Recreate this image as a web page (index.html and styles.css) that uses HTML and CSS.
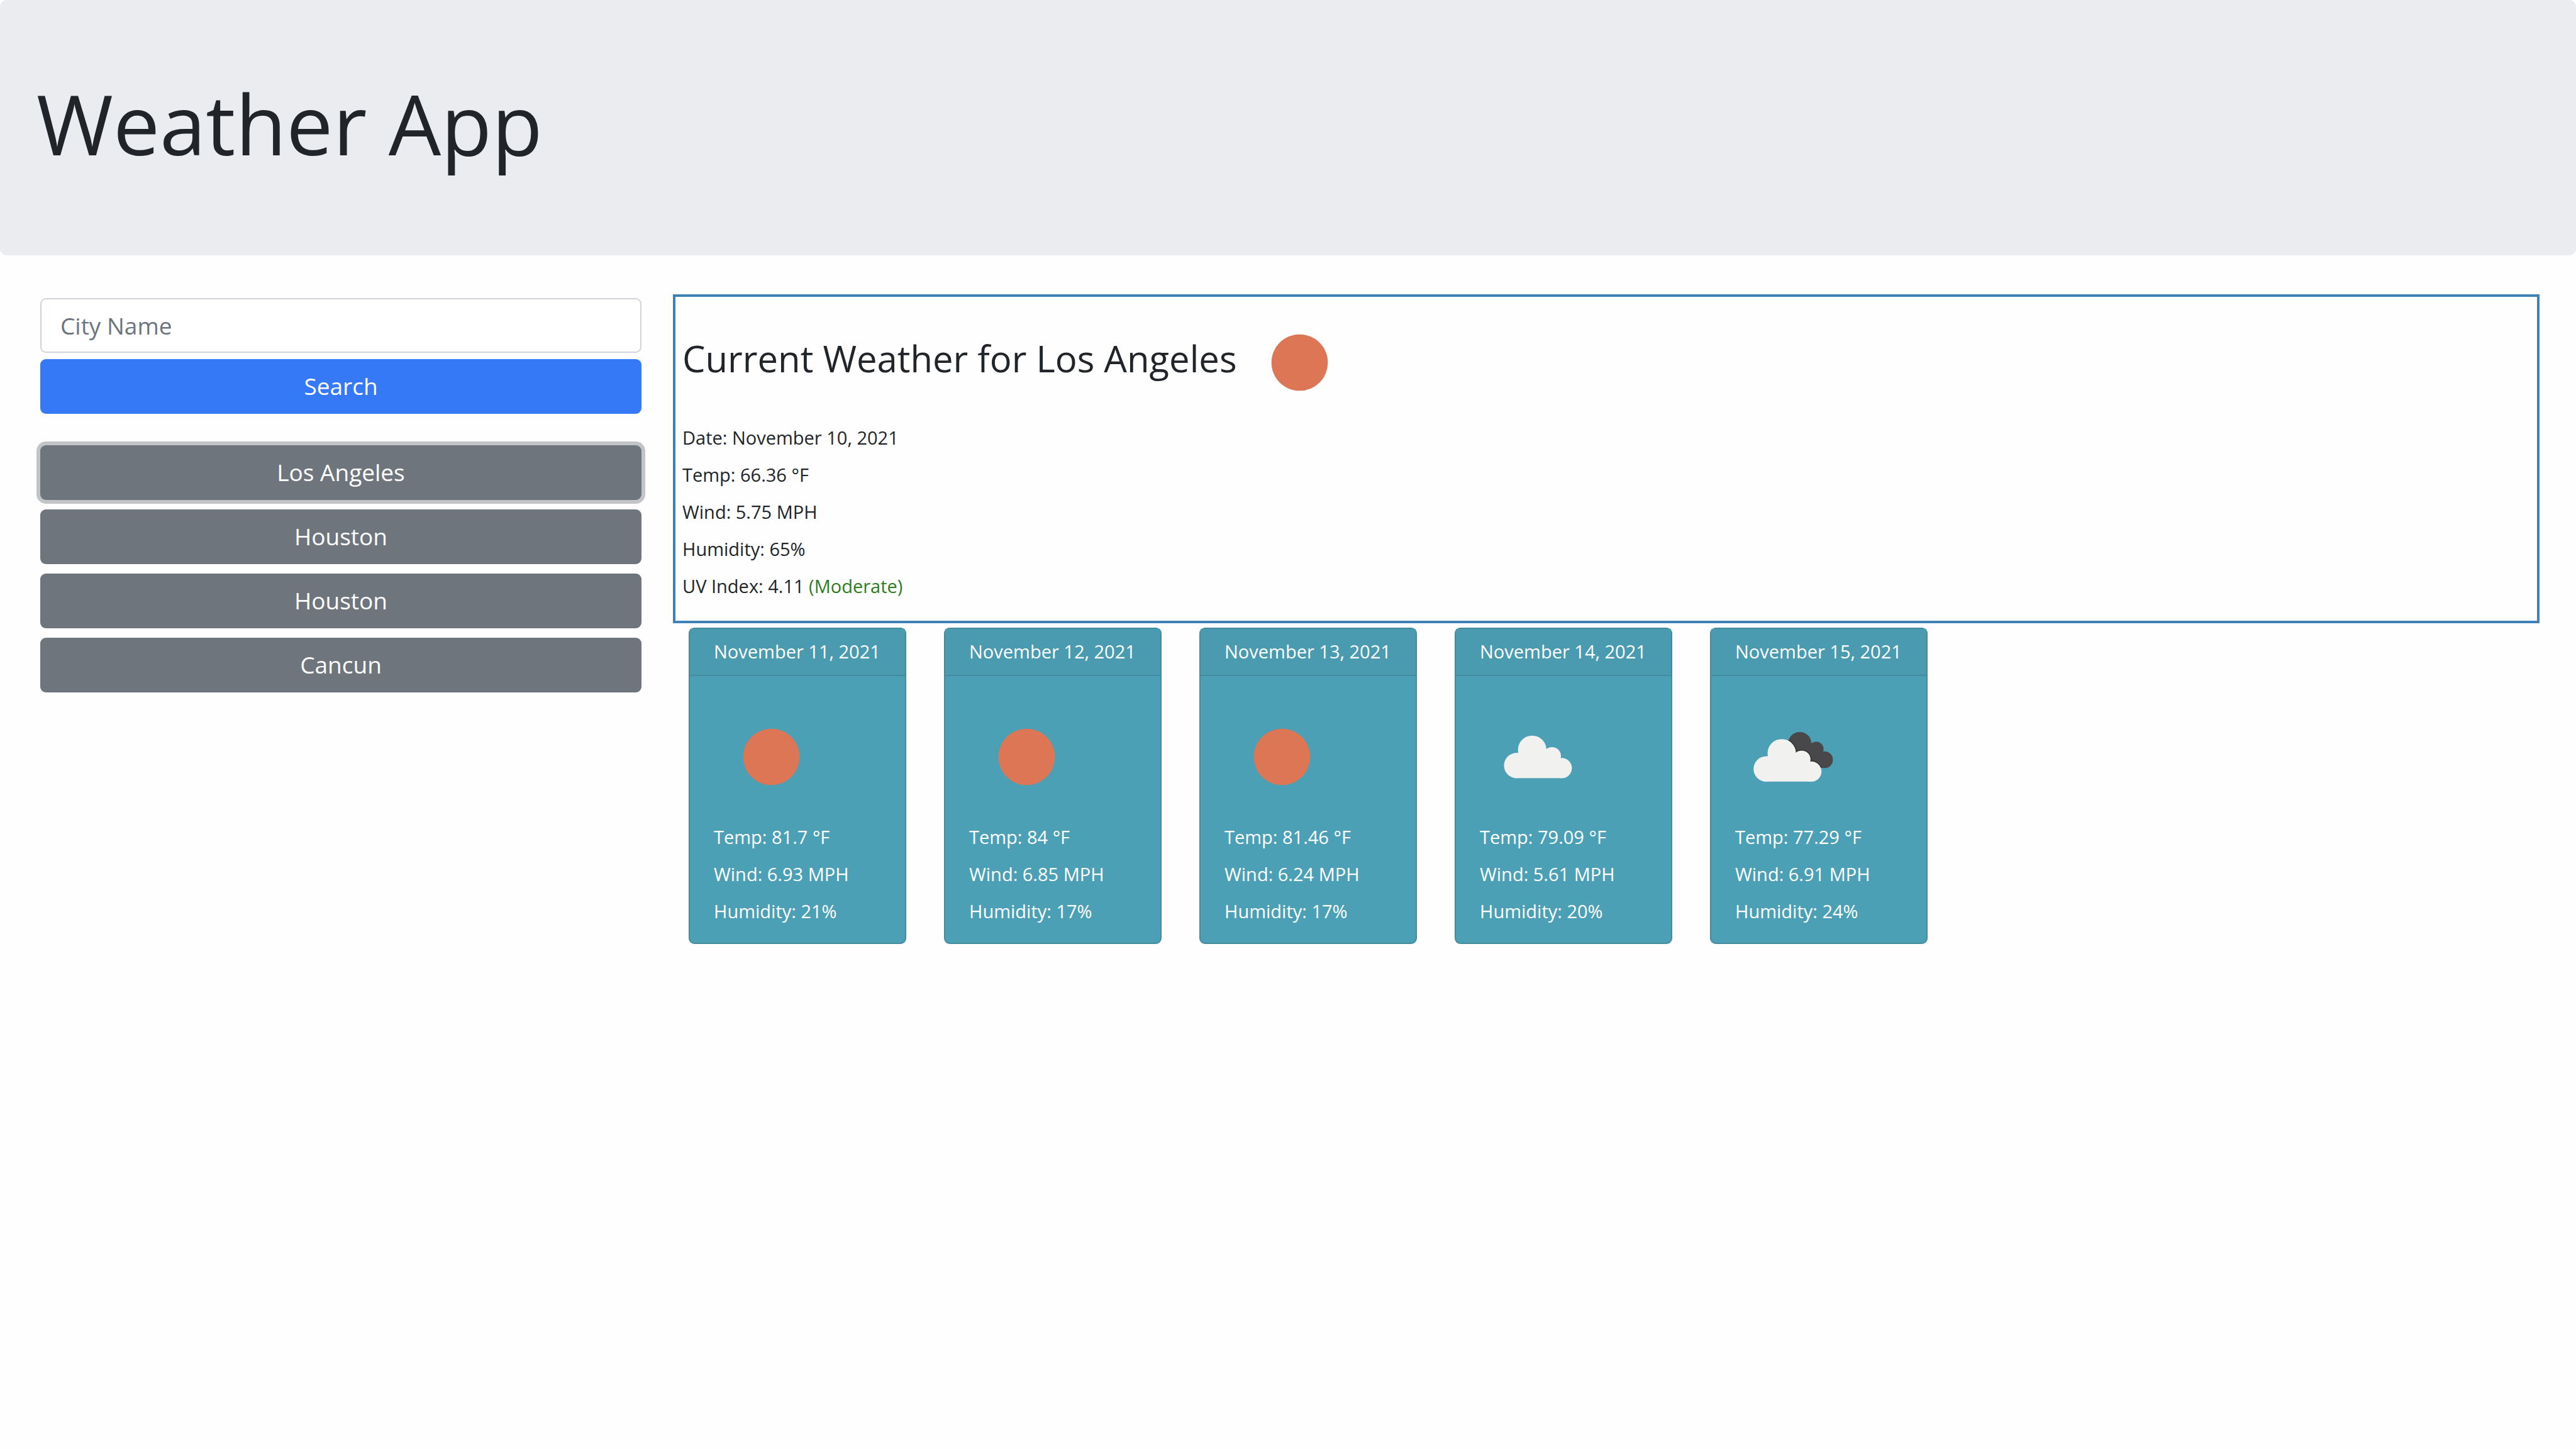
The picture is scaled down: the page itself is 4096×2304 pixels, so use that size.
FILE: index.html
```html
<!DOCTYPE html>
<html lang="en">
<head>
  <meta charset="utf-8">
  <meta name="viewport" content="width=device-width, initial-scale=1">
  <title>Weather App</title>
  <link rel="stylesheet" href="styles.css">
</head>
<body>
  <svg class="icon-defs" width="0" height="0" aria-hidden="true">
    <defs>
      <symbol id="sun" viewBox="0 0 200 200">
        <circle cx="100" cy="100" r="49" fill="#dc7655"/>
      </symbol>
      <g id="cloud-shape">
        <circle cx="64" cy="115" r="22"/>
        <circle cx="91" cy="87.7" r="24.7"/>
        <circle cx="125.5" cy="98.5" r="15.5"/>
        <circle cx="142.5" cy="119.5" r="17.5"/>
        <path d="M64 93h27l35 8 17 10v26H60z"/>
      </g>
      <symbol id="cloud" viewBox="0 0 200 200">
        <use href="#cloud-shape" fill="#f1f2f0"/>
      </symbol>
      <clipPath id="dark-clip">
        <circle cx="112.3" cy="77" r="20.3"/>
        <circle cx="140.7" cy="86.5" r="13"/>
        <circle cx="155.5" cy="105" r="14.5"/>
        <path d="M112 77l29 9 15 19v14h-30l-20-22z"/>
      </clipPath>
      <symbol id="clouds" viewBox="0 0 200 200">
        <g clip-path="url(#dark-clip)">
          <path d="M85 50h90v75H85z" fill="#48484a"/>
          <use href="#cloud-shape" x="-10" y="6" fill="#2c2c2e" stroke="#2c2c2e" stroke-width="3"/>
        </g>
        <use href="#cloud-shape" x="-10" y="6" fill="#f1f2f0"/>
      </symbol>
    </defs>
  </svg>

  <header class="jumbotron">
    <h1 class="title">Weather App</h1>
  </header>

  <main class="layout">
    <aside class="sidebar">
      <form class="search-form">
        <input class="city-input" type="text" placeholder="City Name" aria-label="City Name">
        <button class="btn btn-primary" type="button">Search</button>
      </form>
      <div class="history">
        <button class="btn btn-secondary is-focused" type="button">Los Angeles</button>
        <button class="btn btn-secondary" type="button">Houston</button>
        <button class="btn btn-secondary" type="button">Houston</button>
        <button class="btn btn-secondary" type="button">Cancun</button>
      </div>
    </aside>

    <div class="results">
      <section class="current">
        <h2 class="current-title">Current Weather for Los Angeles<svg class="icon" role="img" aria-label="Clear sky"><use href="#sun"/></svg></h2>
        <ul class="readings">
          <li>Date: November 10, 2021</li>
          <li>Temp: 66.36 °F</li>
          <li>Wind: 5.75 MPH</li>
          <li>Humidity: 65%</li>
          <li>UV Index: 4.11 <span class="uv-moderate">(Moderate)</span></li>
        </ul>
      </section>

      <section class="forecast" aria-label="Five day forecast">
        <article class="card">
          <h3 class="card-header">November 11, 2021</h3>
          <div class="card-body">
            <svg class="icon" role="img" aria-label="Clear sky"><use href="#sun"/></svg>
            <ul class="readings">
              <li>Temp: 81.7 °F</li>
              <li>Wind: 6.93 MPH</li>
              <li>Humidity: 21%</li>
            </ul>
          </div>
        </article>
        <article class="card">
          <h3 class="card-header">November 12, 2021</h3>
          <div class="card-body">
            <svg class="icon" role="img" aria-label="Clear sky"><use href="#sun"/></svg>
            <ul class="readings">
              <li>Temp: 84 °F</li>
              <li>Wind: 6.85 MPH</li>
              <li>Humidity: 17%</li>
            </ul>
          </div>
        </article>
        <article class="card">
          <h3 class="card-header">November 13, 2021</h3>
          <div class="card-body">
            <svg class="icon" role="img" aria-label="Clear sky"><use href="#sun"/></svg>
            <ul class="readings">
              <li>Temp: 81.46 °F</li>
              <li>Wind: 6.24 MPH</li>
              <li>Humidity: 17%</li>
            </ul>
          </div>
        </article>
        <article class="card">
          <h3 class="card-header">November 14, 2021</h3>
          <div class="card-body">
            <svg class="icon" role="img" aria-label="Scattered clouds"><use href="#cloud"/></svg>
            <ul class="readings">
              <li>Temp: 79.09 °F</li>
              <li>Wind: 5.61 MPH</li>
              <li>Humidity: 20%</li>
            </ul>
          </div>
        </article>
        <article class="card">
          <h3 class="card-header">November 15, 2021</h3>
          <div class="card-body">
            <svg class="icon" role="img" aria-label="Broken clouds"><use href="#clouds"/></svg>
            <ul class="readings">
              <li>Temp: 77.29 °F</li>
              <li>Wind: 6.91 MPH</li>
              <li>Humidity: 24%</li>
            </ul>
          </div>
        </article>
      </section>
    </div>
  </main>
</body>
</html>
```
FILE: styles.css
```css
*,
*::before,
*::after {
  box-sizing: border-box;
}

body {
  margin: 0;
  background: #fefefe;
  color: #212529;
  font-family: "Open Sans", "Noto Sans", sans-serif;
  font-size: 29px;
  line-height: 44px;
}

h1,
h2,
h3,
ul {
  margin: 0;
  padding: 0;
  font-weight: 400;
}

.icon-defs {
  position: absolute;
}

.icon {
  width: 183px;
  height: 183px;
}

/* Page banner */
.jumbotron {
  padding: 117px 58px 131px;
  border-radius: 11px;
  background: #ebecef;
}

.title {
  font-size: 132px;
  line-height: 158px;
}

.layout {
  display: grid;
  grid-template-columns: 239fr 742fr;
  gap: 50px;
  padding: 62px 58px 62px 64px;
}

/* Search and history */
.sidebar {
  display: flex;
  flex-direction: column;
  gap: 50px;
  padding-top: 6px;
}

.search-form {
  display: flex;
  flex-direction: column;
  gap: 10px;
}

.history {
  display: flex;
  flex-direction: column;
  gap: 15px;
}

.city-input,
.btn {
  width: 100%;
  height: 87px;
  border-radius: 9px;
  font-family: inherit;
  font-size: 37px;
  line-height: 55px;
}

.city-input {
  padding: 0 30px;
  border: 2px solid #ced4da;
  background: #fff;
  color: #495057;
}

.city-input::placeholder {
  color: #6c757d;
  opacity: 1;
}

.btn {
  padding: 0 30px 2px;
  border: 0;
  color: #fff;
  text-align: center;
}

.btn-primary {
  background: #3579f6;
}

.btn-secondary {
  background: #6e757c;
}

.btn.is-focused {
  box-shadow: 0 0 0 6px #c1c5c8;
}

/* Current conditions */
.current {
  padding: 13px 11px 33px;
  border: 4px solid #3d81b6;
}

.current-title {
  font-size: 58px;
  line-height: 71px;
}

.current-title .icon {
  margin-left: 8px;
  vertical-align: middle;
}

.readings {
  display: grid;
  gap: 15px;
  list-style: none;
}

.current .readings {
  margin-top: 6px;
}

.uv-moderate {
  color: #2f7d1e;
}

/* Forecast cards */
.forecast {
  display: flex;
  flex-wrap: wrap;
  gap: 60px;
  padding: 7px 25px 0;
}

.card {
  width: 346px;
  border: 2px solid #438ca0;
  border-radius: 9px;
  background: #4ca0b6;
  color: #fff;
}

.card-header {
  padding: 14px 30px 15px 38px;
  border-bottom: 2px solid #438ca0;
  background: #4a9bb0;
  font-size: 29px;
  white-space: nowrap;
}

.card-body {
  display: flex;
  flex-direction: column;
  gap: 14px;
  padding: 37px 30px 28px 38px;
}
```
